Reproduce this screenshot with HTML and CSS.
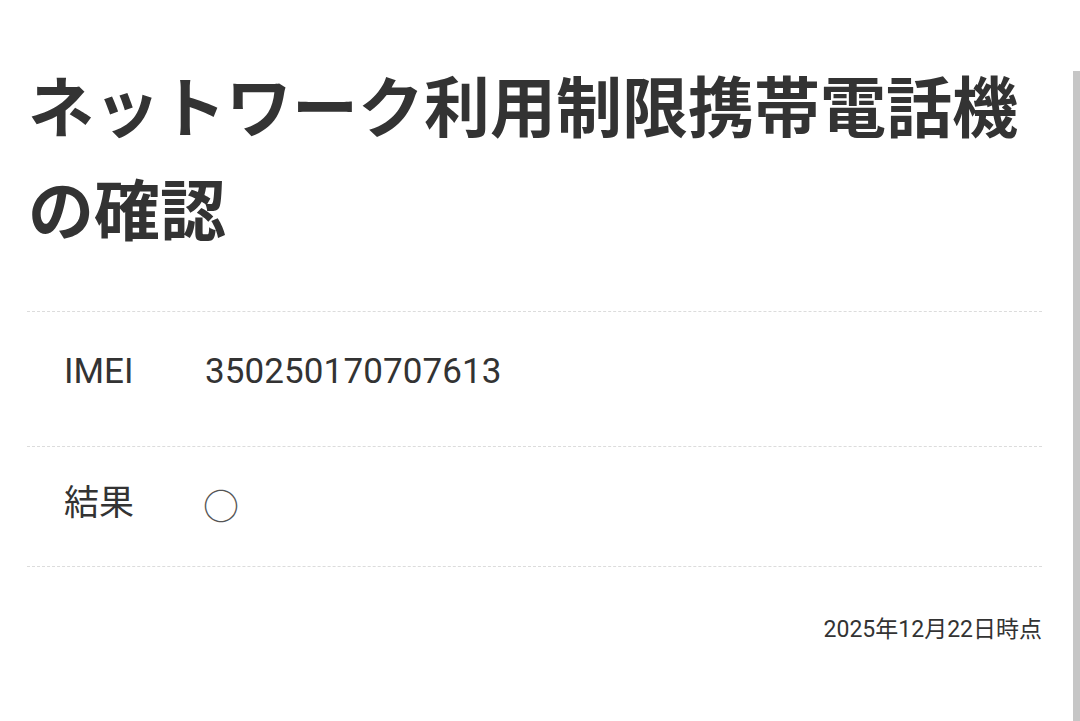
FILE: index.html
```html
<!DOCTYPE html>
<html lang="ja">
<head>
<meta charset="utf-8">
<title>ネットワーク利用制限携帯電話機の確認</title>
<link rel="stylesheet" href="styles.css">
</head>
<body>
<main class="page">
  <h1 class="title">ネットワーク利用制限携帯電話機の確認</h1>
  <div class="result-table">
    <div class="row row-imei">
      <div class="label">IMEI</div>
      <div class="value">350250170707613</div>
    </div>
    <div class="row row-result">
      <div class="label">結果</div>
      <div class="value mark">○</div>
    </div>
  </div>
  <p class="timestamp">2025年12月22日時点</p>
</main>
<div class="scrollbar"></div>
</body>
</html>
```
FILE: styles.css
```css
html, body {
  margin: 0;
  padding: 0;
  background: #ffffff;
}

body {
  font-family: Roboto, "Noto Sans CJK JP", sans-serif;
  color: #333333;
}

.page {
  padding: 0 38px 0 27px;
}

.title {
  margin: 52px 0 53px 1px;
  font-family: "Noto Sans CJK JP", sans-serif;
  font-size: 66px;
  line-height: 103px;
  font-weight: 700;
  color: #333333;
}

.result-table {
  display: flex;
  flex-direction: column;
  border-bottom: 1px dashed #dcdcdc;
}

.row {
  display: flex;
  align-items: center;
  border-top: 1px dashed #dcdcdc;
  padding-left: 37px;
  font-size: 35px;
  line-height: 40px;
}

.row-imei {
  padding-top: 40px;
  padding-bottom: 54px;
}

.row-result {
  padding-top: 37px;
  padding-bottom: 42px;
}

.label {
  width: 141px;
  flex: none;
}

.value {
  letter-spacing: 0.1px;
}

.mark {
  margin-left: -2px;
  font-family: "Noto Sans CJK JP", sans-serif;
  font-size: 36px;
  color: #555555;
}

.timestamp {
  margin: 48px 0 0;
  text-align: right;
  font-size: 23px;
  line-height: 30px;
  color: #333333;
}

.scrollbar {
  position: fixed;
  right: 0;
  top: 71px;
  bottom: 0;
  width: 7px;
  background: #c6c6c6;
}
```
